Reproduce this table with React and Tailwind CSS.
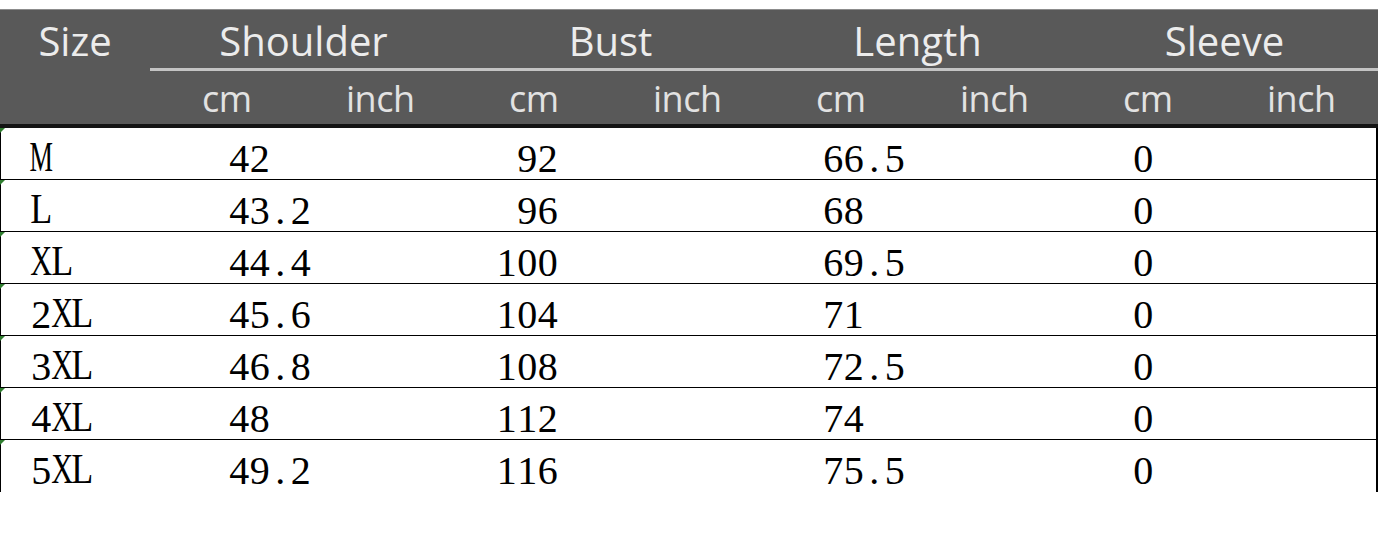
const rows = [
  { size: "M", shoulder: "42", bust: "92", length: "66.5", sleeve: "0" },
  { size: "L", shoulder: "43.2", bust: "96", length: "68", sleeve: "0" },
  { size: "XL", shoulder: "44.4", bust: "100", length: "69.5", sleeve: "0" },
  { size: "2XL", shoulder: "45.6", bust: "104", length: "71", sleeve: "0" },
  { size: "3XL", shoulder: "46.8", bust: "108", length: "72.5", sleeve: "0" },
  { size: "4XL", shoulder: "48", bust: "112", length: "74", sleeve: "0" },
  { size: "5XL", shoulder: "49.2", bust: "116", length: "75.5", sleeve: "0" },
];

const groups = ["Shoulder", "Bust", "Length", "Sleeve"];

// narrow the latin capitals so every char sits in a half-width cell
const squeeze = {
  M: "scale-x-[0.66] scale-y-[1.08] origin-bottom",
  X: "scale-x-[0.76] scale-y-[1.08] origin-bottom",
  L: "scale-x-[0.9] scale-y-[1.08] origin-bottom",
};

function Cells({ text }) {
  return (
    <span className="inline-flex">
      {text.split("").map((ch, i) => (
        <span
          key={i}
          className={`inline-flex justify-center w-[20.5px] ${squeeze[ch] || ""}`}
        >
          {ch}
        </span>
      ))}
    </span>
  );
}

export default function App() {
  return (
    <div className="w-[1379px] h-[556px] bg-white pt-[9px]">
      <div className="w-[1378px]">
        {/* header */}
        <div
          className="flex h-[119px] bg-[#595959] border-t border-[#8c8c8c] border-b-4 border-b-[#141414] text-[#ececec]"
          style={{ fontFamily: '"Open Sans", "Noto Sans", sans-serif' }}
        >
          <div className="w-[150px] text-center text-[40px] leading-[61px]">Size</div>
          <div className="flex-1 flex flex-col">
            <div className="grid grid-cols-4 h-[61px] border-b-[3px] border-[#c4c4c4]">
              {groups.map((g) => (
                <div key={g} className="text-center text-[40px] leading-[61px]">
                  {g}
                </div>
              ))}
            </div>
            <div className="grid grid-cols-8 h-[50px] pt-[3px] text-[36px] leading-[50px] tracking-[-0.5px] text-[#e2e2e2]">
              {groups.map((g) => [
                <div key={g + "cm"} className="text-center">cm</div>,
                <div key={g + "in"} className="text-center">inch</div>,
              ])}
            </div>
          </div>
        </div>

        {/* body */}
        <div
          className="border-l border-r-2 border-black text-[40px] leading-[40px] text-black"
          style={{ fontFamily: '"Liberation Serif", "Times New Roman", serif' }}
        >
          {rows.map((r, i) => (
            <div
              key={r.size}
              className={`relative flex h-[52px] pt-[11px] ${
                i < rows.length - 1 ? "border-b border-black" : ""
              }`}
            >
              <svg
                className="absolute -left-px top-0"
                width="5"
                height="5"
                viewBox="0 0 5 5"
              >
                <polygon points="0,0 5,0 0,5" fill="#2f7d2f" />
              </svg>
              <div className="w-[150px] pl-[30px]">
                <Cells text={r.size} />
              </div>
              <div className="w-[307px] pl-[78px]">
                <Cells text={r.shoulder} />
              </div>
              <div className="w-[307px] pr-[207px] text-right">
                <Cells text={r.bust} />
              </div>
              <div className="w-[307px] pl-[58px]">
                <Cells text={r.length} />
              </div>
              <div className="flex-1 pl-[61px]">
                <Cells text={r.sleeve} />
              </div>
            </div>
          ))}
        </div>
      </div>
    </div>
  );
}
